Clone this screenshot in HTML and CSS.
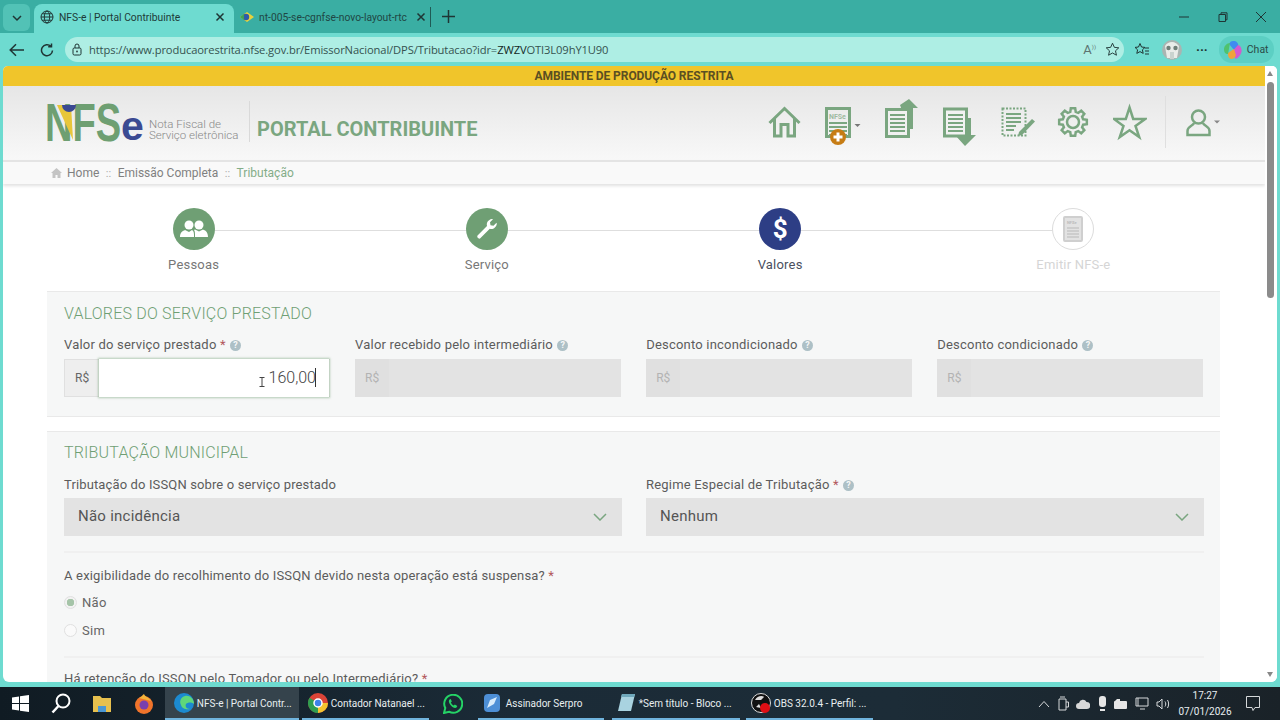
FILE: index.html
```html
<!DOCTYPE html>
<html lang="pt-BR">
<head>
<meta charset="utf-8">
<title>NFS-e | Portal Contribuinte</title>
<link rel="stylesheet" href="styles.css">
</head>
<body>
<div class="tabbar">
  <div class="tab-toggle"><svg width="12" height="12" viewBox="0 0 12 12"><path d="M2 4l4 4 4-4" class="ln"/></svg></div>
  <div class="tab active">
    <svg width="14" height="14" viewBox="0 0 14 14"><g class="ln thin"><circle cx="7" cy="7" r="6"/><ellipse cx="7" cy="7" rx="2.7" ry="6"/><path d="M1 7h12M2 3.8h10M2 10.2h10"/></g></svg>
    <span class="tab-title">NFS-e | Portal Contribuinte</span>
    <svg class="tab-x" width="10" height="10" viewBox="0 0 10 10"><path d="M1.500 1.500l7 7M8.500 1.500l-7 7" class="ln"/></svg>
  </div>
  <div class="tab other">
    <svg width="14" height="14" viewBox="0 0 14 14"><path d="M0 7l7-5 7 5-7 5z" fill="#e9d23c"/><circle cx="6" cy="7" r="3.2" fill="#2e5aa8"/><path d="M0 7l4-3v6z" fill="#3da35a"/></svg>
    <span class="tab-title dim">nt-005-se-cgnfse-novo-layout-rtc</span>
    <svg class="tab-x" width="10" height="10" viewBox="0 0 10 10"><path d="M1.500 1.500l7 7M8.500 1.500l-7 7" class="ln"/></svg>
  </div>
  <span class="tab-sep"></span>
  <svg class="tab-plus" width="13" height="13" viewBox="0 0 13 13"><path d="M6.500 0v13M0 6.500h13" class="ln"/></svg>
  <div class="win-ctrl">
    <svg width="10" height="10" viewBox="0 0 10 10"><path d="M0 5h10" class="ln thin"/></svg>
    <svg width="10" height="10" viewBox="0 0 10 10"><path d="M1 2.500h6.500v7H1zM3 2.500V.8h6v7H7.500" class="ln thin"/></svg>
    <svg width="10" height="10" viewBox="0 0 10 10"><path d="M0 0l10 10M10 0L0 10" class="ln thin"/></svg>
  </div>
</div>

<div class="toolbar">
  <svg class="tb-back" width="16" height="14" viewBox="0 0 16 14"><path d="M15 7H1.500M7 1.200L1.200 7 7 12.800" class="ln"/></svg>
  <svg class="tb-reload" width="14" height="14" viewBox="0 0 14 14"><path d="M12.500 7.500a5.500 5.500 0 1 1-1.600-4.200M11.500 .5v3.300H8.200" class="ln"/></svg>
  <div class="address">
    <svg width="10" height="13" viewBox="0 0 10 13"><rect x="1" y="5" width="8" height="7" rx="1.300" class="ln thin"/><path d="M3 5V3a2 2 0 0 1 4 0v2" class="ln thin"/><circle cx="5" cy="8.500" r=".9" fill="#2b3b3a"/></svg>
    <span class="url">https://www.producaorestrita.nfse.gov.br/EmissorNacional/DPS/Tributacao?idr=<b>ZWZV</b>OTI3L09hY1U90</span>
    <span class="read-aloud">A<sup>))</sup></span>
    <svg width="15" height="15" viewBox="0 0 16 16"><path d="M8 1.300l2 4.400 4.700.5-3.500 3.200 1 4.700L8 11.700l-4.200 2.400 1-4.700L1.300 6.200l4.700-.5z" class="ln thin"/></svg>
  </div>
  <svg class="tb-fav" width="16" height="15" viewBox="0 0 16 15"><path d="M6 1.500l1.500 3.500 3.500.4-2.600 2.400.8 3.600L6 9.600l-3.200 1.800.8-3.600L1 5.400l3.500-.4zM11 6h4M11 9h4M11 12h4" class="ln thin"/></svg>
  <div class="avatar"><svg width="20" height="20" viewBox="0 0 20 20"><path d="M3 6c2-3 4-4 7-4s5 2 7 4l-2 12H5z" fill="#e9ece9"/><circle cx="6.500" cy="8" r="2.200" fill="#6f7f78"/><circle cx="13.500" cy="8" r="2.200" fill="#6f7f78"/><path d="M8 12h4v7H8z" fill="#c9d3cf"/></svg></div>
  <span class="dots">···</span>
  <div class="chat">
    <svg width="20" height="20" viewBox="0 0 20 20"><path d="M10 1c4 0 5 2 5.500 5L11 10 6 4c1-2 2-3 4-3z" fill="#3f8cf0"/><path d="M15 5c3 1 4 4 3.500 7-1 3-3 6-6 7l-2-9z" fill="#d45ad0"/><path d="M11 9l2 6c-1 3-3 4-5 4-3-1-3-4-3-6z" fill="#f0a33a"/><path d="M7 3L5 14c-3 0-4-2-4-5s3-6 6-6z" fill="#4fc26e"/></svg>
    <span>Chat</span>
  </div>
</div>

<div class="viewport">
  <main class="page">
    <div class="env-bar">AMBIENTE DE PRODUÇÃO RESTRITA</div>
    <header class="header">
      <div class="logo">
        <span class="logo-nfs">NFS</span><span class="logo-e">e</span>
        <svg class="logo-mark" width="20" height="37" viewBox="0 0 20 37"><path d="M0 0h14l2 35z" fill="#e8c63a"/><path d="M5 0h14a7 7 0 0 1-14 0z" fill="#3b4a92"/></svg>
      </div>
      <div class="logo-sub">Nota Fiscal de<br>Serviço eletrônica</div>
      <div class="portal">PORTAL CONTRIBUINTE</div>
      <nav class="tools">
        <svg class="tool t-home" viewBox="0 0 34 52"><path d="M1.500 27L16.500 12.500 31.500 27M6.500 22.500V40H13V28.500h7V40h6.500V22.500" class="ic"/></svg>
        <svg class="tool t-new" viewBox="0 0 36 52"><rect x="1.500" y="12.500" width="23" height="28" class="ic"/><text x="4" y="22.500" class="doc-label">NFSe</text><path d="M4 27h18M4 31h18M4 35h18M4 39h18" class="ic thin"/><circle cx="13" cy="41" r="8" fill="#c67c14"/><path d="M13 36.500v9M8.500 41h9" stroke="#fff" stroke-width="3" fill="none"/><path d="M29.500 28h6l-3 3z" fill="#777"/></svg>
        <svg class="tool t-up" viewBox="0 0 34 52"><path d="M15 9L24 3l9 9h-5v21h-4z" fill="#7aa680"/><rect x="1.500" y="13.500" width="22" height="27" fill="#f1f1f1" stroke="#7aa680" stroke-width="3"/><path d="M5 19h15M5 23h15M5 27h15M5 31h15M5 35h15" class="ic thin"/></svg>
        <svg class="tool t-down" viewBox="0 0 34 52"><path d="M19 22h10v17h5L23 50 13 39z" fill="#7aa680"/><rect x="2.500" y="13" width="22" height="27" fill="#f2f2f2" stroke="#7aa680" stroke-width="3"/><path d="M6 19h15M6 23h15M6 27h15M6 31h15M6 35h15" class="ic thin"/></svg>
        <svg class="tool t-edit" viewBox="0 0 34 52"><rect x="1.500" y="12.500" width="23" height="27" fill="none" stroke="#7aa680" stroke-width="2" stroke-dasharray="2 1.500"/><path d="M5 18h15M5 22h15M5 26h15M5 30h10M5 34h8" class="ic thin"/><path d="M31 23l3 2.500L21 39l-4 1 1-4z" fill="#7aa680"/></svg>
        <svg class="tool t-gear" viewBox="-16 -26 32 52"><path d="M10.140-2.720L13.830-2.190L13.830 2.190L10.140 2.720L9.090 5.250L11.330 8.230L8.230 11.330L5.250 9.090L2.720 10.140L2.190 13.830L-2.190 13.830L-2.720 10.140L-5.250 9.090L-8.230 11.330L-11.330 8.230L-9.090 5.250L-10.140 2.720L-13.830 2.190L-13.830-2.190L-10.140-2.720L-9.090-5.250L-11.330-8.230L-8.230-11.330L-5.250-9.090L-2.720-10.140L-2.190-13.830L2.190-13.830L2.720-10.140L5.250-9.090L8.230-11.330L11.330-8.230L9.090-5.250z" class="ic"/><circle r="6" class="ic"/></svg>
        <svg class="tool t-star" viewBox="0 0 34 52"><path d="M16.500 11.500L20.200 22.900L32.200 22.900L22.500 30L26.200 41L16.500 34.300L6.800 41L10.500 30L.8 22.900L12.800 22.900z" class="ic"/></svg>
        <span class="tool-sep"></span>
        <svg class="tool t-user" viewBox="0 0 36 52"><circle cx="12.500" cy="21" r="6.500" class="ic"/><path d="M8 27c-.5 3-6.500 3-6.500 8v4h22v-4c0-5-6-5-6.500-8" class="ic"/><path d="M28 24.500h6l-3 3z" fill="#888"/></svg>
      </nav>
    </header>
    <div class="breadcrumb">
      <svg width="11" height="10" viewBox="0 0 11 10"><path d="M5.500 0L0 5h1.500v5h3V7h2v3h3V5H11z" fill="#c4c4c4"/></svg>
      <span>Home</span><span class="bc-sep">::</span><span>Emissão Completa</span><span class="bc-sep">::</span><span class="bc-now">Tributação</span>
    </div>

    <div class="content">
      <ol class="steps">
        <li class="step">
          <span class="dot done"><svg width="28" height="20" viewBox="0 0 28 20"><circle cx="9" cy="6" r="4.500" fill="#fff"/><circle cx="19" cy="6" r="4.500" fill="#fff"/><path d="M0 18c0-5 3-6 5-7l4 2 3-2c2 1 2 3 2 7zM15 18c0-4 0-6-1-7l1-.5 4 2 4-2c2 1 5 2 5 7.500z" fill="#fff"/></svg></span>
          <span class="step-name">Pessoas</span>
        </li>
        <li class="step">
          <span class="dot done"><svg width="22" height="22" viewBox="0 0 22 22"><path d="M1.500 17.500L11 8c-.8-3 1-6.500 5-7l1 .3-3 3 .5 3 3 .5 3-3 .3 1c-.5 4-4 6-7 5L4 20.500a2.100 2.100 0 0 1-2.500-3z" fill="#fff"/></svg></span>
          <span class="step-name">Serviço</span>
        </li>
        <li class="step">
          <span class="dot current">$</span>
          <span class="step-name on">Valores</span>
        </li>
        <li class="step">
          <span class="dot todo"><svg width="20" height="26" viewBox="0 0 20 26"><rect x="1" y="1" width="18" height="24" rx="1" fill="#e2e2e2" stroke="#cfcfcf" stroke-width="2"/><text x="4" y="8" class="doc-mini">NFSe</text><path d="M4 12h12M4 15h12M4 18h12M4 21h12" stroke="#c6c6c6" stroke-width="1.500"/></svg></span>
          <span class="step-name off">Emitir NFS-e</span>
        </li>
      </ol>

      <section class="panel first">
        <h2>VALORES DO SERVIÇO PRESTADO</h2>
        <div class="grid-4">
          <div class="field">
            <label>Valor do serviço prestado <em>*</em> <i class="help">?</i></label>
            <div class="input focus"><span class="addon">R$</span><span class="value"><svg class="ibeam" width="6" height="10" viewBox="0 0 6 10"><path d="M.5.500h5M.5 9.500h5M3 .5v9" stroke="#444" fill="none"/></svg>160,00<span class="caret"></span></span></div>
          </div>
          <div class="field">
            <label>Valor recebido pelo intermediário <i class="help">?</i></label>
            <div class="input"><span class="addon">R$</span></div>
          </div>
          <div class="field">
            <label>Desconto incondicionado <i class="help">?</i></label>
            <div class="input"><span class="addon">R$</span></div>
          </div>
          <div class="field">
            <label>Desconto condicionado <i class="help">?</i></label>
            <div class="input"><span class="addon">R$</span></div>
          </div>
        </div>
      </section>

      <section class="panel second">
        <h2>TRIBUTAÇÃO MUNICIPAL</h2>
        <div class="grid-2">
          <div class="field">
            <label class="tight">Tributação do ISSQN sobre o serviço prestado</label>
            <div class="select">Não incidência<svg width="14" height="8" viewBox="0 0 14 8"><path d="M1 1l6 6 6-6" class="chev"/></svg></div>
          </div>
          <div class="field">
            <label>Regime Especial de Tributação <em>*</em> <i class="help">?</i></label>
            <div class="select">Nenhum<svg width="14" height="8" viewBox="0 0 14 8"><path d="M1 1l6 6 6-6" class="chev"/></svg></div>
          </div>
        </div>
        <hr class="rule rule-a">
        <p class="question">A exigibilidade do recolhimento do ISSQN devido nesta operação está suspensa? <em>*</em></p>
        <div class="radio on-r"><span class="ring"></span>Não</div>
        <div class="radio"><span class="ring"></span>Sim</div>
        <hr class="rule rule-b">
        <p class="question">Há retenção do ISSQN pelo Tomador ou pelo Intermediário? <em>*</em></p>
      </section>
    </div>
  </main>
  <div class="scrollbar"><span class="arrow up"></span><span class="thumb"></span><span class="arrow down"></span></div>
</div>

<footer class="taskbar">
  <div class="slot s-win"><svg width="17" height="17" viewBox="0 0 17 17"><path d="M0 2.500l7-1v6.500H0zM8 1.300L17 0v8H8zM0 9h7v6.500l-7-1zM8 9h9v8l-9-1.300z" fill="#fff"/></svg></div>
  <div class="slot s-icon"><svg width="20" height="21" viewBox="0 0 20 21"><circle cx="12" cy="8" r="6.500" fill="none" stroke="#fff" stroke-width="2"/><path d="M7.500 13L1.500 19.500" stroke="#fff" stroke-width="2.500"/></svg></div>
  <div class="slot s-icon"><svg width="20" height="18" viewBox="0 0 20 18"><path d="M1 1h7l2 2h9v14H1z" fill="#e7c04e"/><path d="M6 11h8v6H6z" fill="#4a97d4"/></svg></div>
  <div class="slot s-icon"><svg width="20" height="20" viewBox="0 0 20 20"><circle cx="10" cy="11" r="9" fill="#f0742b"/><path d="M5 4c3-1 3-3 5-4 1 3 5 3 7 7z" fill="#f5b43a"/><circle cx="10" cy="11" r="4.500" fill="#7a3fae"/></svg></div>
  <div class="slot app a-active"><svg width="20" height="20" viewBox="0 0 20 20"><circle cx="10" cy="10" r="10" fill="#1c8ad0"/><path d="M20 11c0-6-5-9-9-8C7 4 5 8 7 12c1 4 6 5 9 4-4 0-5-3-4-5 2-2 6-2 8 0z" fill="#5fd67a"/></svg><span>NFS-e | Portal Contr...</span></div>
  <div class="slot app a-chrome"><svg width="20" height="20" viewBox="0 0 20 20"><circle cx="10" cy="10" r="10" fill="#dc4437"/><path d="M10 10L1.500 4.800A10 10 0 0 0 10 20z" fill="#2f9e4f"/><path d="M10 10h10a10 10 0 0 1-10 10z" fill="#f4c430"/><circle cx="10" cy="10" r="4" fill="#3f82e8" stroke="#fff" stroke-width="1.500"/></svg><span>Contador Natanael ...</span></div>
  <div class="slot s-wa"><svg width="20" height="20" viewBox="0 0 20 20"><path d="M1 19l1.300-5A9 9 0 1 1 6 17.700z" fill="none" stroke="#25d366" stroke-width="2"/><path d="M6.500 5.500c-1 1-1 3 1 5.500s4.500 3.500 6 2.500l.8-1.500-2.500-1.500-1 1c-1.500-.5-2.500-2-3-3l1-1L7.800 5z" fill="#25d366"/></svg></div>
  <div class="slot app a-sign"><svg width="16" height="18" viewBox="0 0 16 18"><rect width="16" height="18" rx="4" fill="#4d8fd6"/><path d="M3 14l3-8 7-3-3 7z" fill="#d9ecfb"/></svg><span>Assinador Serpro</span></div>
  <div class="slot app a-note"><svg width="17" height="19" viewBox="0 0 17 19"><path d="M4 1h13l-4 17H0z" fill="#a9d3e0"/><path d="M4 1h13l-1 3H3z" fill="#6fa8bb"/></svg><span>*Sem título - Bloco ...</span></div>
  <div class="slot app a-obs"><svg width="20" height="24" viewBox="0 0 20 24"><circle cx="10" cy="12" r="9.500" fill="#111" stroke="#ddd"/><path d="M4 9c2-4 7-5 9-3l-3 3zM5 16l3-3 2 4z" fill="#ddd"/><circle cx="14" cy="17" r="5" fill="#e00f14"/></svg><span>OBS 32.0.4 - Perfil: ...</span></div>
  <div class="tray">
    <svg width="12" height="8" viewBox="0 0 12 8"><path d="M1 7l5-5.500L11 7" class="tr"/></svg>
    <svg width="11" height="15" viewBox="0 0 11 15"><path d="M2 1h5M1 3h7v11H1zM8 6h2.500v5H8" class="tr"/></svg>
    <svg width="14" height="10" viewBox="0 0 14 10"><path d="M3 10a3 3 0 0 1 0-6 4 4 0 0 1 7.500-1A3.500 3.500 0 0 1 11 10z" fill="#d8d8d8"/></svg>
    <svg width="9" height="15" viewBox="0 0 9 15"><rect x="1" width="7" height="11" rx="3" fill="#e6e6e6"/><path d="M2 13h5v2H2z" fill="#e6e6e6"/></svg>
    <svg width="13" height="10" viewBox="0 0 13 10"><rect y="2" width="13" height="8" rx="1" fill="#e6e6e6"/><path d="M1 2l2-2h3v2" fill="#e6e6e6"/></svg>
    <svg width="14" height="13" viewBox="0 0 14 13"><path d="M1 1h12v8H1zM5 12h5M3 1v8" class="tr"/></svg>
    <svg width="14" height="12" viewBox="0 0 14 12"><path d="M1 4h2l3-3v10L3 8H1zM9 3.500c1 1.500 1 3.500 0 5M11.500 2c1.500 2.500 1.500 5.500 0 8" class="tr"/></svg>
    <div class="clock"><span>17:27</span><span>07/01/2026</span></div>
    <svg class="notif" width="14" height="15" viewBox="0 0 14 15"><path d="M.5.500h13v11H9l-2 3-1-3H.5z" class="tr"/></svg>
  </div>
</footer>
</body>
</html>
```

FILE: styles.css
```css
* { box-sizing: border-box; }
html, body { margin: 0; padding: 0; }
body {
  width: 1280px;
  height: 720px;
  overflow: hidden;
  display: flex;
  flex-direction: column;
  background: #6edbd0;
  font-family: Roboto, "Liberation Sans", sans-serif;
  color: #555;
}
svg { flex: none; }
.ln { fill: none; stroke: #1f3534; stroke-width: 1.500; }
.ln.thin { stroke-width: 1; }

/* tab strip */
.tabbar {
  height: 33px;
  flex: none;
  display: flex;
  align-items: flex-end;
  background: #3aaea3;
  font-size: 10.300px;
  color: #1d3a38;
}
.tab-toggle {
  width: 27px;
  height: 27px;
  margin: 0 4px 2px 3px;
  border-radius: 6px;
  background: #52c2b6;
  display: flex;
  align-items: center;
  justify-content: center;
}
.tab {
  height: 29px;
  display: flex;
  align-items: center;
  padding-bottom: 3px;
}
.tab.active {
  width: 200px;
  padding-left: 6px;
  border-radius: 8px 8px 0 0;
  background: #6edbd0;
}
.tab.other { width: 198px; padding-left: 3px; margin-left: 3px; }
.tab-title { margin-left: 5px; white-space: nowrap; overflow: hidden; flex: 1; }
.tab.other .tab-title { margin-left: 5px; }
.tab-title.dim { color: #1f4744; }
.tab-x { margin: 0 9px 0 6px; flex: none; }
.tab-sep { width: 1px; height: 20px; margin: 0 0 6px -5px; background: #1f5a55; }
.tab-plus { margin: 0 0 10px 11px; }
.win-ctrl {
  margin-left: auto;
  height: 33px;
  width: 101px;
  padding-right: 14px;
  display: flex;
  align-items: center;
  justify-content: space-between;
}

/* toolbar */
.toolbar {
  height: 33px;
  flex: none;
  display: flex;
  align-items: center;
  background: #6edbd0;
}
.tb-back { margin-left: 9px; }
.tb-reload { margin-left: 15px; }
.address {
  width: 1059px;
  height: 25px;
  margin-left: 11px;
  padding: 0 4px 0 7px;
  border-radius: 13px;
  background: #aeeee4;
  display: flex;
  align-items: center;
}
.url {
  margin-left: 7px;
  flex: 1;
  font-family: "Open Sans", "Liberation Sans", sans-serif;
  font-size: 11.200px;
  letter-spacing: -.12px;
  color: #35524f;
  white-space: nowrap;
  overflow: hidden;
}
.url b { font-weight: 400; color: #122624; }
.read-aloud { font-size: 13px; color: #5d7371; margin-right: 9px; }
.read-aloud sup { font-size: 6px; }
.tb-fav { margin-left: 10px; }
.avatar {
  width: 20px;
  height: 20px;
  margin-left: 12px;
  border-radius: 50%;
  background: #a9b5b2;
  overflow: hidden;
  display: flex;
}
.dots { margin-left: 14px; font-size: 13px; font-weight: 700; color: #1f3534; }
.chat {
  width: 55px;
  height: 27px;
  margin-left: 11px;
  padding-left: 4px;
  border-radius: 13px;
  background: #5ccfc3;
  display: flex;
  align-items: center;
  gap: 4px;
  font-size: 10.500px;
  color: #2b4a47;
}

/* viewport */
.viewport {
  flex: none;
  height: 616px;
  margin: 0 3px 5px;
  display: flex;
  overflow: hidden;
  border-radius: 5px 5px 6px 6px;
  background: #fff;
}
.page { width: 1262px; flex: none; overflow: hidden; }
.scrollbar {
  flex: 1;
  position: relative;
  background: #fff;
}
.thumb {
  position: absolute;
  top: 16px;
  left: 2px;
  width: 7px;
  height: 216px;
  border-radius: 3.500px;
  background: #8b8b8b;
}
.arrow { position: absolute; left: 2px; border: 3.500px solid transparent; }
.arrow.up { top: 2px; border-bottom: 5px solid #888; }
.arrow.down { bottom: 2px; border-top: 5px solid #888; }

.env-bar {
  height: 20px;
  background: #f0c52b;
  text-align: center;
  font-size: 12px;
  font-weight: 700;
  line-height: 20px;
  letter-spacing: -.08px;
  color: #5b4f22;
}

/* header */
.header {
  height: 74px;
  padding-left: 42px;
  display: flex;
  align-items: flex-start;
  background: linear-gradient(#e6e6e6, #f8f8f8);
}
.logo {
  position: relative;
  width: 100px;
  height: 50px;
  margin-top: 12px;
  flex: none;
  display: flex;
  align-items: flex-end;
  white-space: nowrap;
  font-family: "Liberation Sans", Arial, sans-serif;
  font-weight: 700;
}
.logo-nfs {
  width: 76px;
  flex: none;
  display: block;
  transform: scaleX(.72);
  transform-origin: left bottom;
  font-size: 53px;
  line-height: 50px;
  color: #6e9f72;
}
.logo-e { font-size: 41px; line-height: 38px; color: #3b4a92; margin-bottom: 3px; }
.logo-mark { position: absolute; left: 12px; top: 7px; }
.logo-sub {
  width: 100px;
  margin: 33px 0 0 4px;
  flex: none;
  font-size: 11.500px;
  font-weight: 300;
  line-height: 10.500px;
  color: #888;
}
.portal {
  height: 41px;
  margin-top: 15px;
  padding: 15px 0 0 7px;
  border-left: 1px solid #d9d9d9;
  font-size: 20px;
  font-weight: 700;
  line-height: 26px;
  color: #7aa680;
  white-space: nowrap;
}
.tools {
  margin-left: auto;
  height: 52px;
  margin-top: 10px;
  padding-right: 43px;
  display: flex;
}
.tool { height: 52px; width: 34px; flex: none; }
.t-home { margin-right: 23px; }
.t-new { width: 36px; margin-right: 24px; }
.t-up { margin-right: 23px; }
.t-down { margin-right: 25px; }
.t-edit { margin-right: 22px; }
.t-gear { width: 32px; margin-right: 24px; }
.t-star { margin-right: 18px; }
.tool-sep { width: 1px; height: 52px; background: #dfdfdf; margin-right: 20px; }
.t-user { width: 36px; }
.ic { fill: none; stroke: #7aa680; stroke-width: 3; }
.t-gear .ic, .t-star .ic, .t-user .ic { stroke-width: 2.500; }
.ic.thin { stroke-width: 1.800; }
.doc-label { font: 700 7px Roboto, sans-serif; fill: #9ebaa1; }
.doc-mini { font: 700 4px Roboto, sans-serif; fill: #bbb; }

/* breadcrumb */
.breadcrumb {
  height: 24px;
  border-top: 2px solid #e4e4e4;
  padding-left: 48px;
  display: flex;
  align-items: center;
  gap: 6.500px;
  background: #f9f9f9;
  box-shadow: 0 2px 3px rgba(0, 0, 0, .12);
  font-size: 12px;
  color: #808080;
}
.breadcrumb svg { margin-right: -1.500px; }
.bc-now { color: #84ad88; }
.bc-sep { color: #aaa; font-size: 11px; }

/* steps */
.content { width: 1173px; margin-left: 44px; }
.steps {
  position: relative;
  height: 107px;
  margin: 0;
  padding: 24px 0 0;
  list-style: none;
  display: grid;
  grid-template-columns: repeat(4, 1fr);
}
.steps::before {
  content: "";
  position: absolute;
  left: 147px;
  right: 147px;
  top: 46px;
  height: 1px;
  background: #dedede;
}
.step {
  position: relative;
  display: flex;
  flex-direction: column;
  align-items: center;
}
.dot {
  width: 42px;
  height: 42px;
  border-radius: 50%;
  display: flex;
  align-items: center;
  justify-content: center;
  color: #fff;
}
.dot.done { background: #6f9f74; }
.dot.current { background: #2d3e85; font-size: 26px; font-weight: 700; }
.dot.todo { background: #fff; border: 1.500px solid #dcdcdc; }
.step-name {
  margin-top: 7px;
  font-size: 13px;
  line-height: 16px;
  letter-spacing: .2px;
  color: #777;
}
.step-name.on { color: #4a4f60; }
.step-name.off { color: #d5d5d5; }

/* panels */
.panel {
  padding: 0 16px 0 17px;
  background: #f6f7f7;
  border-top: 1px solid #e9e9e9;
  border-bottom: 1px solid #e9e9e9;
}
.panel.first { height: 126px; }
.panel.second { height: 300px; margin-top: 14px; }
h2 {
  margin: 0;
  padding-top: 12px;
  font-size: 16px;
  font-weight: 300;
  line-height: 20px;
  letter-spacing: .2px;
  color: #6f9f74;
}
.panel.second h2 { padding-top: 11px; }
.grid-4 {
  margin-top: 13px;
  display: grid;
  grid-template-columns: repeat(4, 266px);
  column-gap: 25.100px;
}
.grid-2 {
  margin-top: 14px;
  display: grid;
  grid-template-columns: 558px 558px;
  column-gap: 24px;
}
label {
  display: block;
  height: 15px;
  margin-bottom: 7px;
  font-size: 13px;
  line-height: 15px;
  letter-spacing: .2px;
  color: #5c5c5c;
  white-space: nowrap;
}
.grid-2 label { margin-bottom: 6px; }
label.tight { letter-spacing: .13px; }
em { font-style: normal; color: #b2585c; }
.help {
  display: inline-block;
  width: 11px;
  height: 11px;
  margin-left: 1px;
  border-radius: 50%;
  background: #adc0c6;
  font-style: normal;
  font-size: 9px;
  font-weight: 700;
  line-height: 11px;
  text-align: center;
  color: #f6f7f7;
  vertical-align: 1px;
}
.input {
  height: 38px;
  display: flex;
  background: #e3e3e3;
}
.addon {
  width: 34px;
  padding-left: 10px;
  font-size: 12px;
  line-height: 38px;
  color: #b3b3b3;
  background: #e0e0e0;
}
.input.focus { background: #efefef; border: 1px solid #e0e0e0; border-right: 0; }
.input.focus .addon { color: #666; line-height: 36px; width: 34px; background: #eee; }
.value {
  position: relative;
  flex: 1;
  margin: -1px 1px -1px 0;
  padding-right: 13px;
  background: #fff;
  box-shadow: 0 0 2px 1px rgba(111, 159, 116, .5);
  text-align: right;
  font-size: 16px;
  font-weight: 300;
  line-height: 37px;
  color: #444;
}
.caret { position: absolute; right: 13px; top: 9px; width: 1px; height: 19px; background: #333; }
.ibeam { position: absolute; left: 160px; top: 18px; }
.select {
  height: 38px;
  padding: 0 15px 2px 14px;
  display: flex;
  align-items: center;
  justify-content: space-between;
  background: #e3e3e3;
  font-size: 15px;
  letter-spacing: .25px;
  color: #555;
}
.select svg { margin-top: 2px; }
.chev { fill: none; stroke: #7aa680; stroke-width: 1.500; }
.rule { height: 2px; margin: 0; border: 0; background: #f0f0f0; }
.rule-a { margin-top: 15px; }
.rule-b { margin-top: 12px; }
.question {
  margin: 15px 0 0;
  height: 15px;
  font-size: 13px;
  line-height: 15px;
  letter-spacing: .18px;
  color: #5c5c5c;
}
.rule-b + .question { margin-top: 13px; }
.radio {
  height: 27.500px;
  display: flex;
  align-items: center;
  gap: 5px;
  font-size: 13px;
  letter-spacing: .3px;
  color: #666;
}
.rule-a + .question + .radio { margin-top: 6px; }
.ring {
  width: 13px;
  height: 13px;
  border: 1px solid #e0e0e0;
  border-radius: 50%;
  background: #fafafa;
}
.on-r .ring { background: radial-gradient(circle, #a5c4a8 0 3.500px, #f2f2f2 4px); }

/* taskbar */
.taskbar {
  height: 33px;
  flex: none;
  display: flex;
  background: linear-gradient(90deg, #101b23, #1b2b37 40%, #1c2c37 70%, #1a2228);
  font-size: 10px;
  color: #e8eef0;
}
.slot { height: 33px; flex: none; display: flex; align-items: center; justify-content: center; }
.s-win { width: 40px; }
.s-icon { width: 41.600px; }
.s-wa { width: 49px; }
.app {
  justify-content: flex-start;
  white-space: nowrap;
  overflow: hidden;
  border-bottom: 2px solid #70b4dd;
  gap: 3px;
}
.a-active { width: 134px; padding-left: 9px; background: #35434c; }
.a-chrome { width: 127px; margin-left: 3px; padding-left: 6px; }
.a-sign { width: 126px; padding-left: 6px; gap: 6px; }
.a-note { width: 128px; margin-left: 8px; padding-left: 6px; gap: 4px; }
.a-obs { width: 127px; margin-left: 6px; padding-left: 5px; gap: 3px; }
.app span { padding-top: 1px; }
.tray {
  margin-left: auto;
  padding-right: 20px;
  display: flex;
  align-items: center;
  gap: 7.500px;
}
.tr { fill: none; stroke: #d5d8da; stroke-width: 1; }
.clock {
  width: 60px;
  margin-left: -2.500px;
  display: flex;
  flex-direction: column;
  align-items: center;
  font-size: 10px;
  line-height: 16px;
}
.notif { margin-left: 3.500px; }
```
